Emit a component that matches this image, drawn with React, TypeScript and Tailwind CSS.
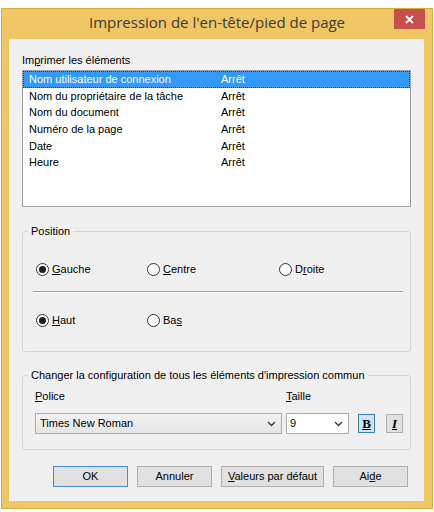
import React from "react";

const rows = [
  "Nom utilisateur de connexion",
  "Nom du propriétaire de la tâche",
  "Nom du document",
  "Numéro de la page",
  "Date",
  "Heure",
];

function Radio({ checked, children, w }: { checked?: boolean; children: React.ReactNode; w: string }) {
  return (
    <div className={`flex items-center gap-[3px] h-[14px] ${w}`}>
      <span className="w-[13px] h-[13px] rounded-full border border-[#333] bg-white flex items-center justify-center">
        {checked && <span className="w-[7px] h-[7px] rounded-full bg-[#1e1e1e]" />}
      </span>
      <span>{children}</span>
    </div>
  );
}

function Chevron() {
  return (
    <svg width="9" height="6" viewBox="0 0 9 6">
      <path d="M1 1 L4.5 4.5 L8 1" fill="none" stroke="#333" strokeWidth="1.3" />
    </svg>
  );
}

function Btn({ children, def }: { children: React.ReactNode; def?: boolean }) {
  return (
    <button
      className={`w-[75px] h-[21px] border bg-[#e1e1e1] flex items-center justify-center ${
        def ? "border-[#3c8fd8]" : "border-[#adadad]"
      }`}
    >
      {children}
    </button>
  );
}

export default function App() {
  return (
    <div
      className="w-[434px] h-[512px] bg-white pt-[8px] pl-[1px] text-[11px] text-black"
      style={{ fontFamily: '"Liberation Sans", Arial, sans-serif' }}
    >
      <div className="w-[432px] h-[501px] border border-[#d6ac45] bg-[#f1c665] flex flex-col">
        {/* title bar */}
        <div className="grid grid-cols-[1fr_auto_1fr] h-[30px]">
          <div />
          <div
            className="text-[15px] text-[#3a3a3a] leading-[26px]"
            style={{ fontFamily: '"Open Sans", "Noto Sans", sans-serif' }}
          >
            Impression de l'en-tête/pied de page
          </div>
          <div className="flex justify-end pr-[7px]">
            <div className="w-[31px] h-[20px] bg-[#c7504e] flex items-center justify-center">
              <svg width="9" height="9" viewBox="0 0 9 9">
                <path d="M1 1 L8 8 M8 1 L1 8" stroke="white" strokeWidth="1.8" />
              </svg>
            </div>
          </div>
        </div>

        {/* client area */}
        <div className="mx-[7px] w-[415px] h-[462px] bg-[#f0f0f0] px-[13px] pt-[14px]">
          <div className="h-[14px] leading-[14px]">
            Im<span className="underline">p</span>rimer les éléments
          </div>
          <div className="mt-[3px] w-[389px] h-[137px] border border-[#a0a0a0] bg-white">
            {rows.map((r, i) => (
              <div
                key={r}
                className={`flex items-center h-[16.67px] pl-[6px] ${
                  i === 0 ? "bg-[#3399ff] text-white outline-1 outline-dotted outline-[#1a3f66] -outline-offset-1" : ""
                }`}
              >
                <span className="w-[192px]">{r}</span>
                <span>Arrêt</span>
              </div>
            ))}
          </div>

          {/* Position */}
          <fieldset className="mt-[17px] w-[389px] border border-[#d6d6d6] rounded-[3px] pl-[13px] pb-[24px]">
            <legend className="ml-[-8px] px-[3px] h-[14px] leading-[14px]">Position</legend>
            <div className="flex mt-[24px]">
              <Radio checked w="w-[111px]">
                <span className="underline">G</span>auche
              </Radio>
              <Radio w="w-[132px]">
                <span className="underline">C</span>entre
              </Radio>
              <Radio w="w-[100px]">
                D<span className="underline">r</span>oite
              </Radio>
            </div>
            <div className="mt-[15px] ml-[-3px] mr-[7px] border-t border-b border-t-[#a0a0a0] border-b-white" />
            <div className="flex mt-[20px]">
              <Radio checked w="w-[111px]">
                <span className="underline">H</span>aut
              </Radio>
              <Radio w="w-[100px]">
                Ba<span className="underline">s</span>
              </Radio>
            </div>
          </fieldset>

          {/* Font settings */}
          <fieldset className="mt-[16px] w-[389px] border border-[#d6d6d6] rounded-[3px] pl-[12px] pb-[15px]">
            <legend className="ml-[-7px] px-[3px] h-[14px] leading-[14px]">
              Changer la configuration de tous les éléments d'impression commun
            </legend>
            <div className="flex mt-[7px] h-[14px] leading-[14px]">
              <span className="w-[251px]">
                <span className="underline">P</span>olice
              </span>
              <span>
                <span className="underline">T</span>aille
              </span>
            </div>
            <div className="flex items-center mt-[10px]">
              <div className="w-[247px] h-[21px] border border-[#acacac] bg-gradient-to-b from-[#f2f2f2] to-[#e5e5e5] flex items-center justify-between pl-[4px] pr-[5px]">
                <span>Times New Roman</span>
                <Chevron />
              </div>
              <div className="ml-[4px] w-[63px] h-[21px] border border-[#acacac] bg-white flex items-center justify-between pl-[3px] pr-[5px]">
                <span>9</span>
                <Chevron />
              </div>
              <div
                className="ml-[9px] w-[17px] h-[19px] border border-[#3c7fb1] bg-[#cce4f7] flex items-center justify-center text-[13px] font-bold underline"
                style={{ fontFamily: '"Liberation Serif", serif' }}
              >
                B
              </div>
              <div
                className="ml-[11px] w-[17px] h-[19px] border border-[#adadad] bg-[#e1e1e1] flex items-center justify-center text-[13px] font-bold italic underline"
                style={{ fontFamily: '"Liberation Serif", serif' }}
              >
                I
              </div>
            </div>
          </fieldset>

          {/* buttons */}
          <div className="flex gap-[9px] mt-[16px] pl-[31px]">
            <Btn def>OK</Btn>
            <Btn>Annuler</Btn>
            <div className="w-[103px]">
              <button className="w-[103px] h-[21px] border border-[#adadad] bg-[#e1e1e1]">
                <span className="underline">V</span>aleurs par défaut
              </button>
            </div>
            <Btn>
              Ai<span className="underline">d</span>e
            </Btn>
          </div>
        </div>
      </div>
    </div>
  );
}
